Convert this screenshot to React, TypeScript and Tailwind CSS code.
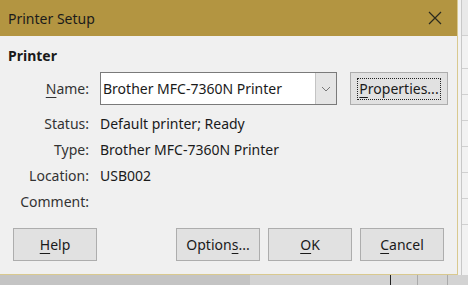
import React from "react";

const font = { fontFamily: '"Noto Sans", "Open Sans", sans-serif' };

function Btn({ children, className = "" }: { children: React.ReactNode; className?: string }) {
  return (
    <div
      className={`h-[33px] flex items-center justify-center bg-[#e1e1e1] border border-[#adadad] text-[14px] text-[#1a1a1a] ${className}`}
    >
      {children}
    </div>
  );
}

function Row({ label, children }: { label: React.ReactNode; children?: React.ReactNode }) {
  return (
    <div className="flex items-center h-[26px]">
      <div className="w-[89px] text-right text-[#333]">{label}</div>
      <div className="ml-[11px] text-[#1a1a1a]">{children}</div>
    </div>
  );
}

export default function App() {
  return (
    <div className="w-[468px] h-[285px] flex flex-col bg-[#c9c9c9] overflow-hidden" style={font}>
      <div className="flex h-[275px]">
        <div className="w-[458px] flex flex-col bg-[#f0f0f0] border-r border-b border-[#d9c98f]">
          {/* title bar */}
          <div className="h-[36px] shrink-0 bg-[#b39541] flex items-center justify-between pl-[8px] pr-[14px]">
            <span className="text-[14px] text-[#1b1b1b]">Printer Setup</span>
            <svg width="14" height="14" viewBox="0 0 14 14" className="mr-[1px]">
              <path d="M1 1 L13 13 M13 1 L1 13" stroke="#2a2a1e" strokeWidth="1.2" />
            </svg>
          </div>

          <div className="flex-1 flex flex-col pt-[10px] px-[8px] text-[14px]">
            <div className="h-[20px] leading-[20px] font-bold text-[14px] text-[#1a1a1a]">Printer</div>

            <div className="flex items-center h-[33px] mt-[6px]">
              <div className="w-[81px] text-right text-[#333]">
                <span className="underline underline-offset-[3px]">N</span>ame:
              </div>
              <div className="ml-[11px] w-[237px] h-[33px] flex bg-white border border-[#7a7a7a]">
                <div className="flex-1 flex items-center pl-[2px] text-[#1a1a1a]">Brother MFC-7360N Printer</div>
                <div className="w-[21px] bg-[#e5e5e5] border-l border-[#c4c4c4] flex items-center justify-center">
                  <svg width="10" height="6" viewBox="0 0 10 6">
                    <path d="M1 1 L5 5 L9 1" stroke="#777" strokeWidth="1" fill="none" />
                  </svg>
                </div>
              </div>
              <Btn className="ml-[13px] w-[98px] h-[32px]">
                <span className="px-[1px] border border-dotted border-[#222] leading-[20px]">
                  <span className="underline underline-offset-[3px]">P</span>roperties...
                </span>
              </Btn>
            </div>

            <div className="mt-[5px] -ml-[8px]">
              <Row label="Status:">Default printer; Ready</Row>
              <Row label="Type:">Brother MFC-7360N Printer</Row>
              <Row label="Location:">USB002</Row>
              <Row label="Comment:" />
            </div>

            <div className="flex mt-[14px] pl-[5px]">
              <Btn className="w-[84px]">
                <span>
                  <span className="underline underline-offset-[3px]">H</span>elp
                </span>
              </Btn>
              <Btn className="w-[84px] ml-[79px]">
                <span>
                  Option<span className="underline underline-offset-[3px]">s</span>...
                </span>
              </Btn>
              <Btn className="w-[84px] ml-[8px]">
                <span>
                  <span className="underline underline-offset-[3px]">O</span>K
                </span>
              </Btn>
              <Btn className="w-[84px] ml-[8px]">
                <span>
                  <span className="underline underline-offset-[3px]">C</span>ancel
                </span>
              </Btn>
            </div>
          </div>
        </div>

        {/* spreadsheet strip behind the dialog */}
        <div className="flex-1 flex bg-[#f2f2f2]">
          <div className="w-[4px] border-r border-[#c8c8c8]" />
          <div className="flex-1 flex flex-col">
            <div className="h-[36px] border-b border-[#d0d0d0] bg-[#e9e9e9]" />
            <div className="h-[33px] border-b border-[#d0d0d0]" />
            <div className="h-[26px] border-b border-[#d0d0d0]" />
            <div className="h-[26px] border-b border-[#d0d0d0]" />
            <div className="h-[26px] border-b border-[#d0d0d0]" />
            <div className="h-[26px] border-b border-[#d0d0d0]" />
            <div className="h-[26px] border-b border-[#d0d0d0]" />
            <div className="h-[26px] border-b border-[#d0d0d0]" />
            <div className="flex-1" />
          </div>
        </div>
      </div>
      <div className="flex-1 flex bg-[#d3d3d3]">
        <div className="w-[250px] bg-[#c4c4c4]" />
        <div className="w-[141px] border-r border-[#222]" />
        <div className="w-[27px] border-r border-[#aaa]" />
        <div className="w-[30px] border-r border-[#aaa]" />
      </div>
    </div>
  );
}
